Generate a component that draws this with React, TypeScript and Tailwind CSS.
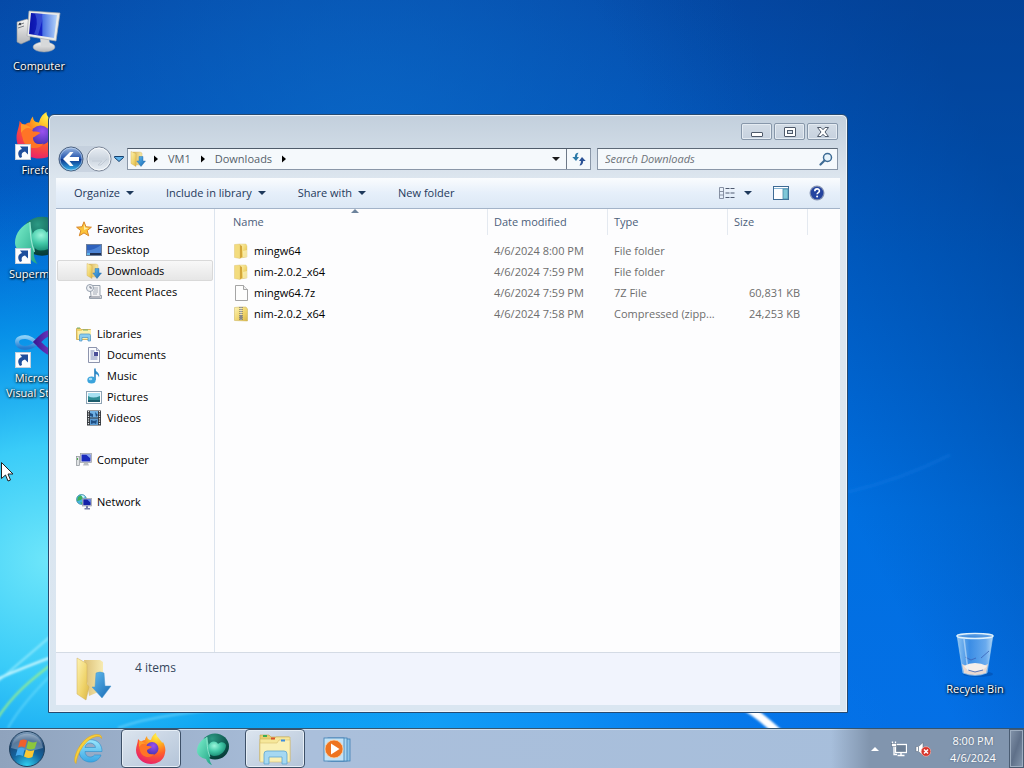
import { useState, type ReactNode } from "react";

const FONT = "font-['Open_Sans','Noto_Sans',sans-serif]";

type IconProps = { className?: string };

/* Gradients shared by the icons below */
function SharedDefs() {
  return (
    <svg className="absolute size-0" aria-hidden="true">
      <defs>
        <linearGradient id="folder" x1="0" y1="0" x2="1" y2="1">
          <stop offset="0" stopColor="#fdf3b4" />
          <stop offset="0.6" stopColor="#efd369" />
          <stop offset="1" stopColor="#d9b546" />
        </linearGradient>
        <linearGradient id="folderBack" x1="0" y1="0" x2="1" y2="0">
          <stop offset="0" stopColor="#d9b75e" />
          <stop offset="1" stopColor="#f8e9a5" />
        </linearGradient>
        <linearGradient id="arrowBlue" x1="0" y1="0" x2="1" y2="1">
          <stop offset="0" stopColor="#63bdf0" />
          <stop offset="1" stopColor="#1668b4" />
        </linearGradient>
        <linearGradient id="screen" x1="0" y1="0" x2="1" y2="0">
          <stop offset="0" stopColor="#0a12a8" />
          <stop offset="0.45" stopColor="#1526c8" />
          <stop offset="0.5" stopColor="#4a74e4" />
          <stop offset="1" stopColor="#b4d4fa" />
        </linearGradient>
        <linearGradient id="metal" x1="0" y1="0" x2="0" y2="1">
          <stop offset="0" stopColor="#f6f6f4" />
          <stop offset="1" stopColor="#b3b5b8" />
        </linearGradient>
        <radialGradient id="foxBody" cx="0.7" cy="0.1" r="0.95">
          <stop offset="0" stopColor="#fff04a" />
          <stop offset="0.3" stopColor="#ffb01e" />
          <stop offset="0.6" stopColor="#ff6028" />
          <stop offset="1" stopColor="#e8206c" />
        </radialGradient>
        <radialGradient id="foxGlobe" cx="0.6" cy="0.3" r="0.7">
          <stop offset="0" stopColor="#9a52f0" />
          <stop offset="1" stopColor="#4a34b4" />
        </radialGradient>
        <linearGradient id="teal" x1="0" y1="0" x2="1" y2="1">
          <stop offset="0" stopColor="#7df0cd" />
          <stop offset="1" stopColor="#20a384" />
        </linearGradient>
        <radialGradient id="tealBall" cx="0.35" cy="0.3" r="0.75">
          <stop offset="0" stopColor="#9cf6dc" />
          <stop offset="0.5" stopColor="#43c9a8" />
          <stop offset="1" stopColor="#178a72" />
        </radialGradient>
        <radialGradient id="tealDark" cx="0.4" cy="0.2" r="0.8">
          <stop offset="0" stopColor="#2c9a84" />
          <stop offset="0.6" stopColor="#0f5c52" />
          <stop offset="1" stopColor="#063a36" />
        </radialGradient>
        <linearGradient id="vsLeft" x1="0" y1="0" x2="0" y2="1">
          <stop offset="0" stopColor="#8bd0f8" />
          <stop offset="1" stopColor="#2179cf" />
        </linearGradient>
        <linearGradient id="vsRight" x1="0" y1="0" x2="1" y2="0">
          <stop offset="0" stopColor="#3c1a94" />
          <stop offset="1" stopColor="#8e4ad8" />
        </linearGradient>
        <linearGradient id="navBlue" x1="0" y1="0" x2="0" y2="1">
          <stop offset="0" stopColor="#9db9e2" />
          <stop offset="0.48" stopColor="#2455ad" />
          <stop offset="0.5" stopColor="#0a2f87" />
          <stop offset="1" stopColor="#35b8f0" />
        </linearGradient>
        <linearGradient id="navGrey" x1="0" y1="0" x2="0" y2="1">
          <stop offset="0" stopColor="#e9eef4" />
          <stop offset="0.5" stopColor="#ccd5df" />
          <stop offset="1" stopColor="#e9eff5" />
        </linearGradient>
        <radialGradient id="orb" cx="0.5" cy="1" r="1">
          <stop offset="0" stopColor="#2fd6f5" />
          <stop offset="0.45" stopColor="#14659f" />
          <stop offset="0.75" stopColor="#1b4675" />
          <stop offset="1" stopColor="#8ba8c4" />
        </radialGradient>
        <linearGradient id="ieBlue" x1="0" y1="0" x2="0" y2="1">
          <stop offset="0" stopColor="#9ae6fc" />
          <stop offset="1" stopColor="#3aa6e4" />
        </linearGradient>
        <linearGradient id="glass" x1="0" y1="0" x2="1" y2="0">
          <stop offset="0" stopColor="#b4dcf8" stopOpacity="0.8" />
          <stop offset="0.35" stopColor="#5aa0ea" stopOpacity="0.65" />
          <stop offset="0.8" stopColor="#8cc0f4" stopOpacity="0.75" />
          <stop offset="1" stopColor="#d0eafc" stopOpacity="0.85" />
        </linearGradient>
      </defs>
    </svg>
  );
}

function Wallpaper() {
  return (
    <svg
      className="absolute inset-0 size-full"
      viewBox="0 0 1024 728"
      preserveAspectRatio="none"
      aria-hidden="true"
    >
      <defs>
        <linearGradient id="sky" x1="0" y1="0" x2="0" y2="1">
          <stop offset="0" stopColor="#054aa8" />
          <stop offset="0.35" stopColor="#0060ca" />
          <stop offset="0.7" stopColor="#006fe0" />
          <stop offset="1" stopColor="#0470e6" />
        </linearGradient>
        <radialGradient id="topGlow" cx="370" cy="150" r="400" gradientUnits="userSpaceOnUse">
          <stop offset="0" stopColor="#0c6cca" stopOpacity="0.7" />
          <stop offset="1" stopColor="#0c6cca" stopOpacity="0" />
        </radialGradient>
        <radialGradient
          id="cyanGlow"
          gradientUnits="userSpaceOnUse"
          cx="0"
          cy="0"
          r="1"
          gradientTransform="translate(50 560) scale(420 380)"
        >
          <stop offset="0" stopColor="#6ee6fa" />
          <stop offset="0.3" stopColor="#3accf8" />
          <stop offset="0.6" stopColor="#0aa0f0" stopOpacity="0.75" />
          <stop offset="1" stopColor="#0080e8" stopOpacity="0" />
        </radialGradient>
        <radialGradient
          id="lowGlow"
          gradientUnits="userSpaceOnUse"
          cx="0"
          cy="0"
          r="1"
          gradientTransform="translate(250 740) scale(650 200)"
        >
          <stop offset="0" stopColor="#1cc0fa" stopOpacity="0.9" />
          <stop offset="0.5" stopColor="#109cfa" stopOpacity="0.7" />
          <stop offset="1" stopColor="#0478f0" stopOpacity="0" />
        </radialGradient>
        <linearGradient id="rightShade" x1="0.72" y1="0.4" x2="1" y2="0.3">
          <stop offset="0" stopColor="#003a88" stopOpacity="0" />
          <stop offset="1" stopColor="#003a88" stopOpacity="0.5" />
        </linearGradient>
        <filter id="soft">
          <feGaussianBlur stdDeviation="1" />
        </filter>
      </defs>
      <rect width="1024" height="728" fill="url(#sky)" />
      <rect width="1024" height="728" fill="url(#topGlow)" />
      <rect width="1024" height="728" fill="url(#lowGlow)" />
      <rect width="1024" height="728" fill="url(#cyanGlow)" />
      <rect width="1024" height="728" fill="url(#rightShade)" />
      <g fill="none" filter="url(#soft)">
        <path d="M-5 680C15 671 30 665 60 654" stroke="#d8fbff" strokeWidth="2" />
        <path d="M-5 684C20 662 35 650 60 628" stroke="#b8f6ff" strokeOpacity="0.6" strokeWidth="2" />
        <path d="M-5 722C12 695 30 680 60 658" stroke="#9cf08a" strokeWidth="2" />
        <path d="M8 728C18 710 35 690 60 666" stroke="#8eeeff" strokeOpacity="0.4" strokeWidth="2" />
        <path d="M118 728C150 716 190 712 260 706" stroke="#8fe4ff" strokeOpacity="0.5" strokeWidth="2" />
        <path d="M740 704C754 711 764 719 780 734" stroke="#fff" strokeWidth="8" />
        <path d="M848 492Q900 480 950 455" stroke="#2a8cf0" strokeOpacity="0.15" strokeWidth="4" />
      </g>
    </svg>
  );
}

/* ---------- large icons ---------- */

function ComputerLarge({ className }: IconProps) {
  return (
    <svg className={className} viewBox="0 0 48 48">
      <path d="M2 14l10-3 3 2v19l-9 4-4-2z" fill="url(#metal)" stroke="#8d9196" strokeWidth="0.6" />
      <path d="M3 17l6-2M3 20l6-2" stroke="#7b8086" />
      <circle cx="5" cy="16" r="1.2" fill="#3c4650" />
      <ellipse cx="29" cy="39" rx="11" ry="5" fill="url(#metal)" stroke="#9fa3a8" strokeWidth="0.5" />
      <path d="M25 29h9l1 9h-9z" fill="#d7d9da" />
      <path d="M14 3l31 2-4 28-29-5z" fill="#e9ebea" stroke="#a6a9ad" strokeWidth="0.7" />
      <path d="M16 5l26 2-3 23-25-4z" fill="url(#screen)" />
      <path d="M20 5.500l9 0.700-6 21-4-0.800q5-11 1-20.900z" fill="#5b7cec" opacity="0.45" />
    </svg>
  );
}

function FirefoxIcon({ className }: IconProps) {
  return (
    <svg className={className} viewBox="0 0 32 32">
      <path
        d="M3 6l3 3c1-1 2-2 4-2 0-1 1-3 2-4 0 2 1 4 4 4 1-4 3-6 5-7 0 3 2 4 4 7 1 1 2 2 2 3l1-1c2 4 3 7 2 11-1 7-7 11-14 11C8 31 1 25 1 17 1 13 3 10 3 6z"
        fill="url(#foxBody)"
      />
      <circle cx="17" cy="15.500" r="6.500" fill="url(#foxGlobe)" />
      <path
        d="M5 12c3-2 6-1 7 1 2 0 4 0 5 1-2 1-3 2-5 3 0 4 3 5 7 4-3 5-13 4-14-4-1-2-1-4 0-5z"
        fill="#ff7426"
      />
      <path d="M4 8c3 0 5 1 7 3-3-1-5 0-7 3z" fill="#ff9a2c" />
    </svg>
  );
}

function SupermiumIcon({ className }: IconProps) {
  return (
    <svg className={className} viewBox="0 0 32 32">
      <ellipse cx="18" cy="13.500" rx="14" ry="13" fill="url(#tealDark)" />
      <path d="M10 4C5 6 0 11 0 18c0 4 4 7 9 8 1 3 3 5 6 6-2-3-3-6-2-9 1-7-2-12-3-19z" fill="url(#teal)" />
      <path
        d="M13 10c4-3 7-1 8 1 3-3 7-2 8 1 0 6-5 11-12 11-4 0-6-4-6-8 0-2 1-4 2-5z"
        fill="url(#tealBall)"
      />
      <path d="M10 4c0 6 0 13 3 20" fill="none" stroke="#bdf9e7" strokeWidth="0.800" opacity="0.7" />
    </svg>
  );
}

function VisualStudioIcon({ className }: IconProps) {
  return (
    <svg className={className} viewBox="0 0 48 48">
      <path
        d="M24 25c-5-5-9-8-14-8-5 0-8 2-8 5s3 6 8 6c6 0 10-3 14-7"
        fill="none"
        stroke="url(#vsLeft)"
        strokeWidth="4"
      />
      <path d="M20 24c8-8 12-13 22-11 4 2 4 16 0 20-6 2-12-3-18-9" fill="none" stroke="url(#vsRight)" strokeWidth="6" />
    </svg>
  );
}

function RecycleBinIcon({ className }: IconProps) {
  return (
    <svg className={className} viewBox="0 0 48 48">
      <ellipse cx="27" cy="43" rx="15" ry="3" fill="#003a8c" opacity="0.35" />
      <path d="M6 4h36l-6 38q-12 5-24 0z" fill="url(#glass)" stroke="#a4d2f4" strokeWidth="0.6" />
      <path d="M11 33q12 7 26 0l-2 9q-11 4-22 0z" fill="#e9d9d0" />
      <path d="M13 35q5-3 11-3t12 3q-3 5-12 5t-11-5z" fill="#f6efea" />
      <path d="M14 26l6 3 5-2M38 20l-8 7M17 39l7 2 8-2" fill="none" stroke="#3a62b8" strokeWidth="0.8" />
      <path d="M13 8l4 32" stroke="#e4f4ff" strokeWidth="1.500" opacity="0.5" />
      <ellipse cx="24" cy="5" rx="18" ry="2.500" fill="#3f88d8" fillOpacity="0.5" stroke="#dff1fc" strokeWidth="1.500" />
    </svg>
  );
}

function ShortcutArrow() {
  return (
    <svg className="absolute bottom-0 left-0 size-4" viewBox="0 0 16 16">
      <rect x="0.500" y="0.500" width="15" height="15" fill="#fcfdfe" stroke="#c4d0dc" />
      <path d="M5 14C2 10 3 6 7 5L5 2.500h8v8l-3-3C7 8 6 10 7 13z" fill="#1f4f9c" />
    </svg>
  );
}

/* ---------- small icons ---------- */

function DownloadsIcon({ className }: IconProps) {
  return (
    <svg className={className} viewBox="0 0 16 16">
      <path d="M3 1h7l2 1v12H5z" fill="url(#folderBack)" stroke="#d4b565" strokeWidth="0.400" />
      <path d="M1 0.500l5 2v13l-5-3z" fill="url(#folder)" stroke="#cfaa4c" strokeWidth="0.400" />
      <path d="M9 5.500h4V10h2.500L11 15.500 6.800 10H9z" fill="url(#arrowBlue)" stroke="#1b68a8" strokeWidth="0.400" />
    </svg>
  );
}

function DownloadsLarge({ className }: IconProps) {
  return (
    <svg className={className} viewBox="0 0 36 44">
      <path d="M8 3h16l3 2v28l-14 6z" fill="url(#folderBack)" opacity="0.85" />
      <path d="M1 1l9 5c1 1 1 2 1 3v18l2 3-3 13-9-6z" fill="url(#folder)" stroke="#cfae5c" strokeWidth="0.500" />
      <path d="M20 16q4-2 8 0l1 13h6l-9 12-10-11h3z" fill="url(#arrowBlue)" stroke="#4a98cc" strokeWidth="0.500" />
    </svg>
  );
}

function FolderIcon({ className }: IconProps) {
  return (
    <svg className={className} viewBox="0 0 16 16">
      <path d="M7 1h6l1 2v11l-7 1z" fill="url(#folder)" stroke="#dcc77a" strokeWidth="0.400" />
      <path d="M1.500 1.500L7 1v14.500l-5.500-1z" fill="#f3dc7e" stroke="#d8bd64" strokeWidth="0.400" />
      <path d="M7 2l2 1v11l-2 1.500z" fill="#d3a63a" />
      <path d="M10 8l4-1v7h-4z" fill="#fbf2bd" opacity="0.7" />
    </svg>
  );
}

function ZipIcon({ className }: IconProps) {
  return (
    <svg className={className} viewBox="0 0 16 16">
      <path d="M1.500 1.500L7 1h6l1.500 2v12L1.500 14.500z" fill="url(#folder)" stroke="#c8b054" strokeWidth="0.500" />
      <path d="M8 1v13" stroke="#4e5056" strokeWidth="3" strokeDasharray="1 1" />
      <path d="M8 1v13" stroke="#e8e8e6" strokeWidth="1" />
      <rect x="6.500" y="9" width="3" height="4" fill="#85878a" />
    </svg>
  );
}

function FileIcon({ className }: IconProps) {
  return (
    <svg className={className} viewBox="0 0 16 16">
      <path d="M2.500 0.500h8l4 4v11h-12z" fill="#fdfdfd" stroke="#9b9b9b" strokeWidth="0.900" />
      <path d="M10.500 0.500v4h4" fill="#eee" stroke="#9b9b9b" strokeWidth="0.900" />
    </svg>
  );
}

function StarIcon({ className }: IconProps) {
  return (
    <svg className={className} viewBox="0 0 16 16">
      <path
        d="M8 0.800l2 5 5.400 0.400-4.200 3.400 1.500 5.200L8 11.900l-4.700 2.900 1.500-5.200L0.600 6.200 6 5.800z"
        fill="#fbc43a"
        stroke="#d8862a"
      />
      <path d="M8 3l1.200 3.500 3.500 0.400L8 9z" fill="#fef0a8" />
    </svg>
  );
}

function DesktopIcon({ className }: IconProps) {
  return (
    <svg className={className} viewBox="0 0 16 16">
      <rect x="0.500" y="2.500" width="15" height="11" fill="#2f62bd" stroke="#6c7f9c" />
      <path d="M1 8q6 1 14-5v8H1z" fill="#5a93e0" opacity="0.7" />
      <rect x="1" y="11" width="14" height="2" fill="#1d2f52" />
      <rect x="1" y="11" width="3" height="2" fill="#5cb4ea" />
    </svg>
  );
}

function RecentIcon({ className }: IconProps) {
  return (
    <svg className={className} viewBox="0 0 16 16">
      <path d="M4 1.500h10v10h1.500v3H3.500v-2H5z" fill="#f2f3f5" stroke="#8f98a6" strokeWidth="0.900" />
      <path d="M8 4h4M8 6h4M7 8h5M7 10h4" stroke="#a6adb8" />
      <circle cx="4" cy="4" r="3.500" fill="#eef1f5" stroke="#96a0ae" />
      <path d="M4 2v2h2M3.500 13h11" fill="none" stroke="#69717f" strokeWidth="0.900" />
    </svg>
  );
}

function LibrariesIcon({ className }: IconProps) {
  return (
    <svg className={className} viewBox="0 0 16 16">
      <path d="M0.500 2.500h4l1 1h9v10h-14z" fill="#f2d36a" stroke="#c5a03c" strokeWidth="0.700" />
      <path d="M1.500 5h4l1-1h8.500v9h-13z" fill="#fbf0ae" />
      <path d="M1 2h3M7 4h5" stroke="#77b06a" strokeWidth="1" />
      <path
        d="M3.500 15V9.500q0-1.500 1.500-1.500h8q1.500 0 1.500 1.500V15h-2.500v-3.500h-6V15z"
        fill="#8accf0"
        stroke="#4a92c4"
        strokeWidth="0.700"
      />
    </svg>
  );
}

function DocumentsIcon({ className }: IconProps) {
  return (
    <svg className={className} viewBox="0 0 16 16">
      <path d="M2.500 0.500h8l3 3v12h-11z" fill="#fafbfe" stroke="#8088a4" strokeWidth="0.900" />
      <path d="M4.500 4h4M4.500 6h3M4.500 8h3M4.500 10h7M4.500 12h7" stroke="#7b88b4" />
      <rect x="8" y="5" width="4" height="4" fill="#4b4f98" />
      <path d="M10.500 0.500v3h3" fill="#dde2f0" stroke="#8088a4" strokeWidth="0.700" />
    </svg>
  );
}

function MusicIcon({ className }: IconProps) {
  return (
    <svg className={className} viewBox="0 0 16 16">
      <path d="M8.500 0.500c0 3 6 3.500 4.500 9-0.500-2.500-2-3.500-4-3.500v6" fill="#2f8fce" />
      <path d="M9 0.500v11.500" stroke="#2a80be" strokeWidth="1.500" />
      <ellipse cx="5.500" cy="12" rx="4.200" ry="3.500" fill="#3aa3dc" />
      <ellipse cx="4.500" cy="11" rx="1.800" ry="1.200" fill="#a5dcf6" />
    </svg>
  );
}

function PicturesIcon({ className }: IconProps) {
  return (
    <svg className={className} viewBox="0 0 16 16">
      <rect x="0.500" y="2.500" width="15" height="12" fill="#fdfdfd" stroke="#8ea3b5" />
      <rect x="2" y="4" width="12" height="9" fill="#a6e0f2" />
      <path d="M2 7q5 3 12 0v6H2z" fill="#2f8d96" />
      <path d="M2 11h12v2H2z" fill="#1b5c6c" />
    </svg>
  );
}

function VideosIcon({ className }: IconProps) {
  return (
    <svg className={className} viewBox="0 0 16 16">
      <rect x="1" y="0.500" width="14" height="15" fill="#34383d" />
      <path d="M2.500 1v14M13.500 1v14" stroke="#e8ebee" strokeWidth="1.200" strokeDasharray="1.200 1.200" />
      <rect x="4" y="1" width="8" height="6.500" fill="#6fb1e4" />
      <rect x="4" y="8.500" width="8" height="6.500" fill="#5a9ad2" />
      <path d="M4 3l3 1v3l-3-1zM9 2l3 3-2 2zM5 10l3 1 3-1-1 4-2-1-3 1z" fill="#1f4f84" />
    </svg>
  );
}

function ComputerIcon({ className }: IconProps) {
  return (
    <svg className={className} viewBox="0 0 16 16">
      <rect x="0.500" y="4.500" width="3" height="9" fill="#dfe2e4" stroke="#8b9096" strokeWidth="0.700" />
      <rect x="1" y="6" width="1" height="2" fill="#4cb04a" />
      <rect x="4.500" y="1.500" width="11" height="9" fill="#e8eaec" stroke="#9398a0" strokeWidth="0.700" />
      <rect x="5.500" y="2.500" width="9" height="7" fill="#1a2bbd" />
      <path d="M10 2.500h4.500v4z" fill="#8aa6f0" />
      <path d="M8 11h4l1 2.500H7z" fill="#b9bdc2" />
    </svg>
  );
}

function NetworkIcon({ className }: IconProps) {
  return (
    <svg className={className} viewBox="0 0 16 16">
      <circle cx="5.500" cy="5.500" r="5" fill="#46b6e0" stroke="#2a7890" strokeWidth="0.600" />
      <path d="M2 3q3-3 5 0l-2 3-4 1zM4 8l3 1-1 1.500z" fill="#3fae5a" />
      <path d="M5 1q3 0 4 2l-2 1z" fill="#d4f2fa" />
      <rect x="6.500" y="4.500" width="9" height="7.500" fill="#dfe2e6" stroke="#888e98" strokeWidth="0.600" />
      <rect x="7.300" y="5.300" width="7.400" height="5.900" fill="#1422a8" />
      <path d="M11 5.300h3.700v3.500z" fill="#6f92ec" />
      <path d="M10 12h2v2h2v1.500H8.500V14H10z" fill="#777ea8" />
    </svg>
  );
}

function CaretDown({ className = "h-1 w-2" }: IconProps) {
  return (
    <svg className={className} viewBox="0 0 8 4">
      <path d="M0 0h8L4 4z" fill="currentColor" />
    </svg>
  );
}

function CrumbArrow() {
  return (
    <svg className="h-2 w-1 text-black" viewBox="0 0 4 8">
      <path d="M0 0.500v7L4 4z" fill="currentColor" />
    </svg>
  );
}

/* ---------- desktop ---------- */

function DesktopShortcut({
  label,
  place,
  shortcut,
  children,
}: {
  label: string;
  place: string;
  shortcut?: boolean;
  children: ReactNode;
}) {
  return (
    <button type="button" className={`absolute flex w-[76px] flex-col items-center gap-0.5 ${place}`}>
      <span className="relative block size-12">
        {children}
        {shortcut && <ShortcutArrow />}
      </span>
      <span className="text-center text-[11px] leading-[15px] text-white [text-shadow:1px_1px_2px_#000,0_0_3px_#000]">
        {label}
      </span>
    </button>
  );
}

const NAV_GROUPS = [
  {
    name: "Favorites",
    icon: StarIcon,
    items: [
      { name: "Desktop", icon: DesktopIcon },
      { name: "Downloads", icon: DownloadsIcon },
      { name: "Recent Places", icon: RecentIcon },
    ],
  },
  {
    name: "Libraries",
    icon: LibrariesIcon,
    items: [
      { name: "Documents", icon: DocumentsIcon },
      { name: "Music", icon: MusicIcon },
      { name: "Pictures", icon: PicturesIcon },
      { name: "Videos", icon: VideosIcon },
    ],
  },
  { name: "Computer", icon: ComputerIcon, items: [] },
  { name: "Network", icon: NetworkIcon, items: [] },
];

const FILES = [
  { name: "mingw64", icon: FolderIcon, date: "4/6/2024 8:00 PM", type: "File folder", size: "" },
  { name: "nim-2.0.2_x64", icon: FolderIcon, date: "4/6/2024 7:59 PM", type: "File folder", size: "" },
  { name: "mingw64.7z", icon: FileIcon, date: "4/6/2024 7:59 PM", type: "7Z File", size: "60,831 KB" },
  { name: "nim-2.0.2_x64", icon: ZipIcon, date: "4/6/2024 7:58 PM", type: "Compressed (zipp...", size: "24,253 KB" },
];

function WindowButtons() {
  const box =
    "flex h-[17px] w-[31px] items-center justify-center rounded-xs border border-[#8797aa] bg-linear-to-b from-[#d3dce6] to-[#c6d1de] shadow-[inset_0_0_0_1px_#e4ebf2]";
  return (
    <div className="flex justify-end gap-0.5">
      <button type="button" aria-label="Minimize" className={box}>
        <svg className="h-3 w-3" viewBox="0 0 12 12">
          <rect x="0.500" y="6.500" width="11" height="4" rx="0.500" fill="#fff" stroke="#4e5969" />
        </svg>
      </button>
      <button type="button" aria-label="Maximize" className={box}>
        <svg className="h-3 w-3" viewBox="0 0 12 12">
          <rect x="0.500" y="1.500" width="11" height="9" rx="0.500" fill="#fff" stroke="#4e5969" />
          <rect x="3.500" y="4.500" width="5" height="3" fill="#d3dce6" stroke="#4e5969" />
        </svg>
      </button>
      <button type="button" aria-label="Close" className={box}>
        <svg className="h-3 w-3" viewBox="0 0 12 12">
          <path
            d="M0.500 1.500h3.500l2 2.200 2-2.200h3.500L8 6l3.500 4.500H8L6 8.300l-2 2.200H0.500L4 6z"
            fill="#fff"
            stroke="#4e5969"
          />
        </svg>
      </button>
    </div>
  );
}

function AddressRow() {
  return (
    <div className="flex h-[22px] items-center">
      <div className="-my-1 flex items-center gap-0.5 rounded-full bg-[#b9c6d5]/50">
        <button type="button" aria-label="Back">
          <svg className="size-[26px]" viewBox="0 0 26 26">
            <circle cx="13" cy="13" r="12" fill="url(#navBlue)" stroke="#4c6280" />
            <circle cx="13" cy="13" r="11" fill="none" stroke="#c8dcf4" strokeOpacity="0.6" />
            <path d="M5 13l7-7h3.500l-4 5H21v4h-9.500l4 5H12z" fill="#fff" />
          </svg>
        </button>
        <button type="button" aria-label="Forward">
          <svg className="size-[26px]" viewBox="0 0 26 26">
            <circle cx="13" cy="13" r="12" fill="url(#navGrey)" stroke="#7c8798" />
            <circle cx="13" cy="13" r="11" fill="none" stroke="#fff" strokeOpacity="0.7" />
            <path d="M21 13l-6 6h-3l4-4H6" fill="none" stroke="#c2cbd6" />
          </svg>
        </button>
      </div>
      <button type="button" aria-label="Recent pages" className="ml-0.5 mr-[3px]">
        <svg className="h-1.5 w-2.5" viewBox="0 0 10 6">
          <path d="M0.500 0.500h9v1L5 5.500 0.500 1.500z" fill="#5fb2ea" stroke="#14406e" />
        </svg>
      </button>

      <nav
        aria-label="Address"
        className="flex h-full min-w-0 flex-1 items-center border border-[#8a97a8] border-t-[#4f5b6a] bg-[#f5f9fc] text-[#555f6b]"
      >
        <DownloadsIcon className="ml-0.5 size-4" />
        <span className="ml-2 flex items-center gap-2.5">
          <CrumbArrow />
          <a href="#vm1">VM1</a>
          <CrumbArrow />
          <a href="#downloads">Downloads</a>
          <CrumbArrow />
        </span>
        <button type="button" aria-label="Previous locations" className="ml-auto mr-1.5 text-[#1a1a1a]">
          <CaretDown />
        </button>
        <button
          type="button"
          aria-label="Refresh"
          className="flex h-full w-6 items-center justify-center border-l border-[#6d7988]"
        >
          <svg className="h-3.5 w-4" viewBox="0 0 16 14">
            <path d="M7.500 0.800C5 1 4 2 3.800 5H1.300L5 9l3-4H6q0-2.500 1.500-4.200z" fill="#2c7aa8" />
            <path d="M8.500 13.500c2.500-0.200 3.500-1.500 3.700-4.500h2.500L11 5 8 9h2q0 2.500-1.500 4.500z" fill="#2b5296" />
          </svg>
        </button>
      </nav>

      <div className="ml-1.5 flex h-full w-[241px] items-center border border-[#8a97a8] border-t-[#5d6977] bg-[#f5f9fc] pl-[7px] pr-1">
        <input
          type="text"
          aria-label="Search Downloads"
          placeholder="Search Downloads"
          className="min-w-0 flex-1 bg-transparent italic outline-none placeholder:text-[#6d7278]"
        />
        <svg className="size-3.5" viewBox="0 0 14 14">
          <circle cx="8.500" cy="5.500" r="4" fill="#e6f3fb" stroke="#3d6b94" strokeWidth="1.500" />
          <path d="M5.500 8.500L1.500 12.500" stroke="#3d6b94" strokeWidth="2.200" strokeLinecap="round" />
        </svg>
      </div>
    </div>
  );
}

function CommandBar() {
  return (
    <div className="flex h-[31px] items-center border-b border-[#a3b3c8] bg-linear-to-b from-[#fafcfe] via-[#e6effa] via-50% to-[#dce8f5] pl-[18px] pr-[15px] text-[#1e395b]">
      <div className="flex items-center gap-8">
        {["Organize", "Include in library", "Share with"].map((label) => (
          <button key={label} type="button" className="flex items-center gap-1.5">
            {label}
            <CaretDown />
          </button>
        ))}
        <button type="button">New folder</button>
      </div>
      <div className="ml-auto flex items-center">
        <button type="button" aria-label="Change your view">
          <svg className="h-3 w-4" viewBox="0 0 16 12">
            <path d="M0.500 0.500h4v11h-4zM0.500 4.500h4M0.500 8h4" fill="none" stroke="#7d879a" strokeWidth="0.900" />
            <path
              d="M6.500 1.500h4M11.500 1.500h4M6.500 6h4M11.500 6h4M6.500 10.500h4M11.500 10.500h4"
              stroke="#4f5a70"
              strokeWidth="1.200"
            />
          </svg>
        </button>
        <button type="button" aria-label="More view options" className="ml-[9px]">
          <CaretDown />
        </button>
        <button type="button" aria-label="Show the preview pane" className="ml-[21px]">
          <svg className="h-3.5 w-4" viewBox="0 0 16 14">
            <rect x="0.500" y="0.500" width="15" height="13" fill="#fdfeff" stroke="#3d6a94" />
            <path d="M1 2.500h14" stroke="#86b4d4" />
            <rect x="10" y="3" width="5" height="10" fill="#7fc8d8" stroke="#4a8ca8" strokeWidth="0.800" />
          </svg>
        </button>
        <button type="button" aria-label="Get help" className="ml-5">
          <svg className="size-4" viewBox="0 0 16 16">
            <circle cx="8" cy="8" r="7.500" fill="#8795b4" />
            <circle cx="8" cy="8" r="6.300" fill="#24439f" />
            <path
              d="M5.800 6.200c0-3 4.600-3 4.600-0.300 0 1.700-2.300 1.600-2.300 3.400"
              fill="none"
              stroke="#fff"
              strokeWidth="1.600"
            />
            <circle cx="8.100" cy="11.600" r="1" fill="#fff" />
          </svg>
        </button>
      </div>
    </div>
  );
}

function NavPane({ selected, onSelect }: { selected: string; onSelect: (name: string) => void }) {
  return (
    <aside className="flex w-[159px] shrink-0 flex-col gap-[21px] border-r border-[#dce4ee] px-px pt-[9px] text-black">
      {NAV_GROUPS.map((group) => (
        <div key={group.name}>
          <button type="button" className="flex h-[21px] w-full items-center gap-[5px] pl-[19px]">
            <group.icon className="size-4" />
            {group.name}
          </button>
          {group.items.map((item) => (
            <button
              key={item.name}
              type="button"
              onClick={() => onSelect(item.name)}
              className={`flex h-[21px] w-full items-center gap-[5px] rounded-xs border pl-7 ${
                selected === item.name
                  ? "border-[#d9d9d9] bg-linear-to-b from-[#f8f8f8] to-[#e6e6e6]"
                  : "border-transparent"
              }`}
            >
              <item.icon className="size-4" />
              {item.name}
            </button>
          ))}
        </div>
      ))}
    </aside>
  );
}

function FileTable() {
  const head = "border-r border-[#e4e9f0] pl-1.5 text-left font-normal text-[#4c607a]";
  return (
    <div className="min-w-0 flex-1 overflow-hidden">
      <table className="w-[593px] table-fixed border-separate border-spacing-0 text-[#6d6d6d]">
        <colgroup>
          <col className="w-[273px]" />
          <col className="w-[120px]" />
          <col className="w-[120px]" />
          <col className="w-[80px]" />
        </colgroup>
        <thead>
          <tr className="h-[26px]">
            <th scope="col" className="relative border-r border-[#e4e9f0] pl-[18px] text-left font-normal text-[#4c607a]">
              Name
              <svg className="absolute left-1/2 top-0 h-1 w-2" viewBox="0 0 8 4">
                <path d="M0 4h8L4 0z" fill="#6d839c" />
              </svg>
            </th>
            <th scope="col" className={head}>Date modified</th>
            <th scope="col" className={head}>Type</th>
            <th scope="col" className={head}>Size</th>
          </tr>
          <tr className="h-[5px]" aria-hidden="true" />
        </thead>
        <tbody>
          {FILES.map((file, i) => (
            <tr key={i} className="h-[21px]">
              <td className="pl-[18px] text-black">
                <span className="flex items-center gap-[5px]">
                  <file.icon className="size-4" />
                  {file.name}
                </span>
              </td>
              <td className="pl-1.5">{file.date}</td>
              <td className="pl-1.5 whitespace-nowrap">{file.type}</td>
              <td className="pr-2 text-right">{file.size}</td>
            </tr>
          ))}
        </tbody>
      </table>
    </div>
  );
}

function ExplorerWindow() {
  const [selected, setSelected] = useState("Downloads");
  return (
    <section
      aria-label="Downloads"
      className="absolute bottom-[15px] left-12 right-[176px] top-[114px] flex flex-col rounded-t-md border border-[#274a70] bg-linear-to-b from-[#c2cfdc] via-[#dde6ef] via-[64px] to-[#dae6f1] px-[7px] pb-[7px] shadow-[inset_0_0_0_1px_#eef4fa]"
    >
      <header className="flex flex-col gap-2 px-0.5 py-2">
        <WindowButtons />
        <AddressRow />
      </header>
      <CommandBar />
      <div className="flex min-h-0 flex-1 bg-[#fdfdfe]">
        <NavPane selected={selected} onSelect={setSelected} />
        <FileTable />
      </div>
      <footer className="flex h-[53px] items-start border-t border-[#d4dbe5] bg-[#f1f4fd] pl-5 pt-1 text-[#34465c]">
        <DownloadsLarge className="h-11 w-9" />
        <p className="ml-[23px] mt-[3px] text-xs">{FILES.length} items</p>
      </footer>
    </section>
  );
}

/* ---------- taskbar ---------- */

function TaskButton({ label, active, children }: { label: string; active?: boolean; children: ReactNode }) {
  return (
    <button
      type="button"
      aria-label={label}
      className={`flex h-full w-[60px] items-center justify-center rounded-sm border ${
        active
          ? "border-[#3d5068] bg-linear-to-br from-[#dce5ef] to-[#b4c4d8] shadow-[inset_0_0_0_1px_#e6eef6]"
          : "border-transparent"
      }`}
    >
      {children}
    </button>
  );
}

function Taskbar() {
  return (
    <footer className="relative flex h-10 shrink-0 items-stretch border-t border-[#35556f] bg-linear-to-r from-[#8fa3bd] via-[#aabfdb] via-30% to-[#a6bedb] text-white shadow-[inset_0_1px_0_#d2e0ee]">
      <button type="button" aria-label="Start" className="flex w-[54px] items-center justify-center">
        <svg className="size-9" viewBox="0 0 36 36">
          <circle cx="18" cy="18" r="17.500" fill="url(#orb)" stroke="#20405e" />
          <path d="M2 17C4 -2 32 -2 34 17Q18 22 2 17z" fill="#fff" opacity="0.28" />
          <path d="M11 9.500q4-2 7 0L16 16.500q-3.500-1.800-7 0z" fill="#f0602c" />
          <path d="M19.200 10q4 2.500 8.800 0.500L25.800 17.500q-4.500 2-8.400-0.300z" fill="#8cc63c" />
          <path d="M8.700 17.800q3.500-2 7 0L13.800 25q-3.500-2-7.200 0z" fill="#45a8ec" />
          <path d="M17 18.500q4 2.200 8.400 0.400L23.400 26q-4.500 2-8.400-0.400z" fill="#fcc832" />
        </svg>
      </button>
      <div className="ml-[5px] flex gap-0.5">
        <TaskButton label="Internet Explorer">
          <svg className="size-8" viewBox="0 0 32 32">
            <path
              d="M29 18.500H12c0 6 7 7 9.500 3.500H28C24 33 6 31 6 17.500 6 4 29 2 29 18.500zM12 14.500h10.500C22 9 13 8 12 14.500z"
              fill="url(#ieBlue)"
              stroke="#2a8fcc"
              strokeWidth="0.600"
            />
            <path
              d="M3 30.500C-2 27 8 2 24 1.500c3 0 5 1 4.500 4-1-2-3-2.500-5-2C13 5 4 20 3 30.500z"
              fill="#f8cf3a"
              stroke="#e0a81c"
              strokeWidth="0.600"
            />
          </svg>
        </TaskButton>
        <TaskButton label="Firefox" active>
          <FirefoxIcon className="size-8" />
        </TaskButton>
        <TaskButton label="Supermium">
          <SupermiumIcon className="size-8" />
        </TaskButton>
        <TaskButton label="Windows Explorer" active>
          <svg className="size-9" viewBox="0 0 36 36">
            <path d="M3 4h9l2 2h18v24H3z" fill="#e8cf70" stroke="#c4a546" strokeWidth="0.600" />
            <path d="M3 8h14l2-2h14v24H3z" fill="#f6e79a" stroke="#cdb25a" strokeWidth="0.600" />
            <path d="M3 12h17l2-3h11v22H3z" fill="#faf0b4" stroke="#d8c070" strokeWidth="0.600" />
            <path d="M6 5h4" stroke="#3cae52" strokeWidth="2" />
            <path d="M14 7.500h4" stroke="#d8542c" strokeWidth="2" />
            <path d="M24 9.500h4" stroke="#3f8edc" strokeWidth="2" />
            <path
              d="M7 33V23q0-3 3-3h17q3 0 3 3v10h-5v-7H12v7z"
              fill="#a5d8f2"
              stroke="#5ea4d0"
              strokeWidth="0.800"
            />
          </svg>
        </TaskButton>
        <TaskButton label="Windows Media Player">
          <svg className="size-7" viewBox="0 0 28 28">
            <rect x="8" y="4" width="19" height="22" fill="#8ec4e8" stroke="#3f7fb4" strokeWidth="0.800" />
            <rect x="5" y="3" width="19" height="23" fill="#a9d6f0" stroke="#3f7fb4" strokeWidth="0.800" />
            <rect x="1" y="3" width="20" height="23" fill="#c2e2f6" stroke="#3f7fb4" strokeWidth="0.800" />
            <circle cx="11" cy="14" r="9" fill="#ee7420" stroke="#fbd0a4" strokeWidth="0.800" />
            <path d="M8 8.500v11l8.500-5.500z" fill="#fff" />
          </svg>
        </TaskButton>
      </div>

      <div className="ml-auto flex items-center bg-linear-to-r from-transparent to-[#8195ae] to-20% pl-10">
        <button type="button" aria-label="Show hidden icons">
          <svg className="h-1 w-2" viewBox="0 0 8 4">
            <path d="M0 4h8L4 0z" fill="#fff" />
          </svg>
        </button>
        <button type="button" aria-label="Network" className="ml-3">
          <svg className="size-4" viewBox="0 0 16 16">
            <rect x="4.500" y="3.500" width="11" height="8" fill="#6d7f95" stroke="#fff" strokeWidth="1.300" />
            <path d="M10 12v2M6.500 14.500h7" stroke="#fff" strokeWidth="1.400" />
            <path d="M1.500 0.500v2M4.500 0.500v2M3 5v8.500h3" fill="none" stroke="#fff" strokeWidth="1.300" />
            <rect x="0.700" y="2.500" width="4.600" height="3" fill="#fff" stroke="#5a6b80" strokeWidth="0.500" />
          </svg>
        </button>
        <button type="button" aria-label="Volume muted" className="ml-2">
          <svg className="size-4" viewBox="0 0 16 16">
            <path d="M1 5.500h2.500L8 1.500v13l-4.500-4H1z" fill="#fff" stroke="#5a6776" strokeWidth="0.500" />
            <path d="M3.500 5.500v5" stroke="#8593a5" />
            <circle cx="11" cy="10.500" r="4.800" fill="#d8342a" stroke="#f0b4ae" strokeWidth="0.700" />
            <path d="M9 8.500l4 4M13 8.500l-4 4" stroke="#fff" strokeWidth="1.500" />
          </svg>
        </button>
        <button
          type="button"
          className="ml-1.5 w-[72px] text-center text-[11px] leading-[17px] [text-shadow:0_0_2px_#4f6279]"
        >
          <time dateTime="2024-04-06T20:00" className="block">
            <span className="block">8:00 PM</span>
            <span className="block">4/6/2024</span>
          </time>
        </button>
        <button
          type="button"
          aria-label="Show desktop"
          className="h-full w-[15px] border border-[#4a5c72] bg-linear-to-br from-[#8495ab] via-[#5f7089] to-[#8597ad] shadow-[inset_0_0_0_1px_#9dadc0]"
        />
      </div>
    </footer>
  );
}

export default function App() {
  return (
    <div className={`flex h-screen flex-col overflow-hidden text-[11px] leading-4 ${FONT}`}>
      <SharedDefs />
      <main className="relative min-h-0 flex-1">
        <Wallpaper />
        <DesktopShortcut label="Computer" place="left-px top-2">
          <ComputerLarge className="size-full" />
        </DesktopShortcut>
        <DesktopShortcut label="Firefox" place="left-px top-28" shortcut>
          <FirefoxIcon className="size-full" />
        </DesktopShortcut>
        <DesktopShortcut label="Supermium" place="left-px top-[216px]" shortcut>
          <SupermiumIcon className="size-full" />
        </DesktopShortcut>
        <DesktopShortcut label="Microsoft Visual Studio" place="left-px top-80" shortcut>
          <VisualStudioIcon className="size-full" />
        </DesktopShortcut>
        <DesktopShortcut label="Recycle Bin" place="bottom-8 right-[11px]">
          <RecycleBinIcon className="size-full" />
        </DesktopShortcut>

        <ExplorerWindow />

        {/* Mouse pointer */}
        <svg className="absolute left-px top-[462px] h-5 w-3" viewBox="0 0 12 20" aria-hidden="true">
          <path d="M0.500 0.500v16l4-3.500 2.500 6 2.500-1-2.500-6h5z" fill="#fff" stroke="#222" />
        </svg>
      </main>
      <Taskbar />
    </div>
  );
}
